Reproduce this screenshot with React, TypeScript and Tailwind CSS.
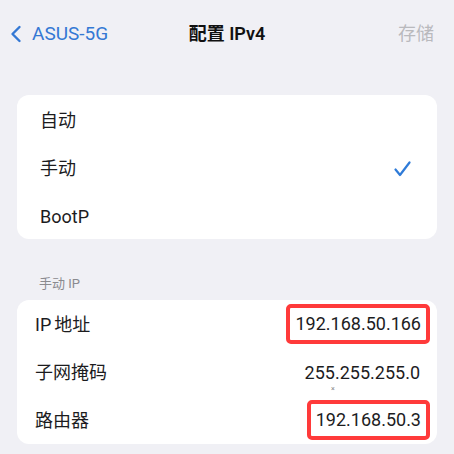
import React from 'react';

// Row of a grouped settings list
function Row({ label, value, boxed, check, pl, dy }: { label: React.ReactNode; value?: string; boxed?: boolean; check?: boolean; pl: string; dy?: string }) {
    return (
        <div className={`flex h-[48px] items-center justify-between ${pl} ${dy ?? ''} pr-[17px]`}>
            <span className="text-[18px] text-[#1c1c1e]">{label}</span>
            {value && (
                <span
                    className={
                        boxed
                            ? '-mr-[10px] rounded-[5px] border-[4px] border-[#ff3a3a] px-[5px] py-[3px] text-[18px] leading-[26px] text-[#1c1c1e]'
                            : 'text-[18px] text-[#1c1c1e]'
                    }>
                    {value}
                </span>
            )}
            {check && (
                <svg width="17" height="16" viewBox="0 0 17 16" className="mr-[9px]">
                    <path d="M1.5 8.5 L6 14 L15.5 1.5" fill="none" stroke="#2f7bd8" strokeWidth="2.2" strokeLinecap="round" strokeLinejoin="round" />
                </svg>
            )}
        </div>
    );
}

export default function App() {
    return (
        <div
            className="h-[454px] w-[454px] overflow-hidden bg-[#f0f0f5]"
            style={{ fontFamily: 'Roboto, "Noto Sans CJK SC", sans-serif' }}>
            {/* Nav bar */}
            <div className="relative flex h-[68px] items-start pt-[22px]">
                <div className="flex items-center pl-[9px] text-[#3478d4]">
                    <svg width="14" height="18" viewBox="0 0 14 18">
                        <path d="M10.5 2 L3.5 9 L10.5 16" fill="none" stroke="#3478d4" strokeWidth="2.4" strokeLinecap="round" strokeLinejoin="round" />
                    </svg>
                    <span className="ml-[9px] text-[19px] leading-[24px]">ASUS-5G</span>
                </div>
                <div className="absolute left-0 right-0 top-[22px] text-center text-[18px] font-semibold leading-[24px] text-[#111]">
                    配置 IPv4
                </div>
                <span className="ml-auto pr-[20px] text-[18px] leading-[24px] text-[#b9b9bd]">存储</span>
            </div>

            {/* Mode list */}
            <div className="mx-[17px] mt-[27px] overflow-hidden rounded-[12px] bg-white">
                <Row label="自动" pl="pl-[23px]" dy="pt-[3px]" />
                <Row label="手动" pl="pl-[23px]" dy="pt-[3px]" check />
                <Row label="BootP" pl="pl-[23px]" dy="pt-[3px]" />
            </div>

            {/* Manual IP section */}
            <div className="mt-[36px] pl-[39px] text-[13px] leading-[18px] text-[#8a8a8f]">手动 IP</div>
            <div className="mx-[17px] mt-[7px] rounded-[12px] bg-white">
                <Row label={<>IP<span className="ml-[3px]">地址</span></>} value="192.168.50.166" boxed pl="pl-[18px]" />
                <div className="relative">
                    <Row label="子网掩码" value="255.255.255.0" pl="pl-[18px]" />
                    <span className="absolute left-[314px] top-[37px] text-[7px] leading-[8px] text-[#888]">×</span>
                </div>
                <Row label="路由器" value="192.168.50.3" boxed pl="pl-[18px]" />
            </div>
        </div>
    );
}
